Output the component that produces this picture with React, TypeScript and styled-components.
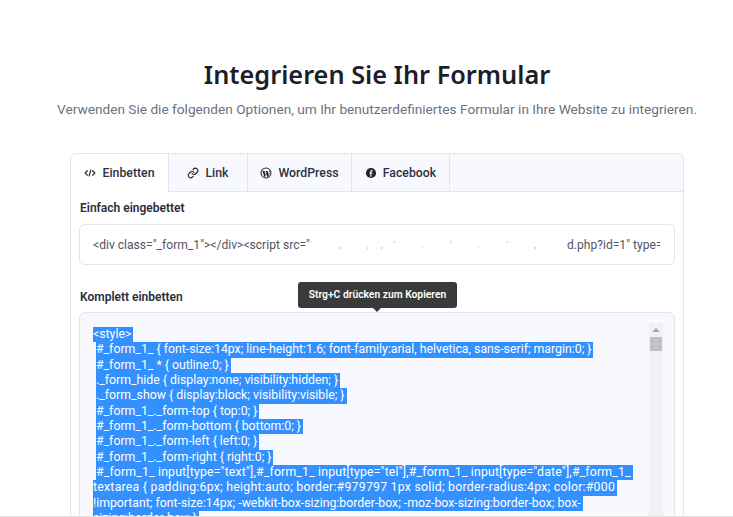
import React from 'react'
import styled, { createGlobalStyle } from 'styled-components'

const GlobalStyle = createGlobalStyle`
  html, body {
    margin: 0;
    padding: 0;
    height: 517px;
    overflow: hidden;
    background: #fff;
    font-family: Roboto, "Liberation Sans", sans-serif;
  }
  * { box-sizing: border-box; }
`

const Page = styled.div`
  width: 733px;
  height: 517px;
  overflow: hidden;
  padding-left: 21px;
  display: flex;
  flex-direction: column;
  align-items: center;
  border-bottom: 1px solid #e2e2e2;
`

const Title = styled.h1`
  margin: 56px 0 0;
  font: 600 25.3px/36px "Noto Sans", sans-serif;
  color: #1c1e29;
  white-space: nowrap;
`

const Lead = styled.p`
  margin: 6px 0 0;
  font-size: 13.66px;
  line-height: 22px;
  color: #6d7081;
  white-space: nowrap;
`

const Card = styled.section`
  margin-top: 33px;
  width: 614px;
  flex: none;
  border: 1px solid #e2e4ee;
  border-bottom: none;
  border-radius: 6px 6px 0 0;
  height: 400px;
`

const TabBar = styled.nav`
  display: flex;
  height: 38px;
  background: #f8f9fe;
  border-radius: 6px 6px 0 0;
  border-bottom: 1px solid #e2e4ee;
`

const Tab = styled.button<{ $active?: boolean; $width: number }>`
  width: ${p => p.$width}px;
  height: ${p => (p.$active ? 38 : 37)}px;
  display: flex;
  align-items: center;
  justify-content: center;
  gap: 6px;
  padding: 0;
  border: none;
  border-right: 1px solid #e2e4ee;
  border-radius: ${p => (p.$active ? '6px 0 0 0' : '0')};
  background: ${p => (p.$active ? '#fff' : 'transparent')};
  font: 500 12.3px/18px Roboto, sans-serif;
  color: #2f3140;
`

const Icon = styled.svg`
  width: 12px;
  height: 12px;
  flex: none;
  color: #23252f;
`

const Body = styled.div`
  position: relative;
  padding: 7px 8px 0 8px;
`

const FieldLabel = styled.h2`
  margin: 0;
  height: 18px;
  padding-left: 1px;
  font: 600 12px/18px Roboto, sans-serif;
  color: #2b2d38;
`

const SnippetBox = styled.div`
  margin-top: 7px;
  height: 41px;
  padding: 0 14px 0 13px;
  display: flex;
  align-items: center;
  overflow: hidden;
  white-space: nowrap;
  border: 1px solid #e2e4ee;
  border-radius: 6px;
  background: #fff;
  font-size: 12.1px;
  color: #53555f;
`

const Blurred = styled.span`
  flex: 1;
  min-width: 0;
  padding-left: 1px;
  letter-spacing: 12px;
  font-size: 9px;
  color: #b5b7c0;
`

const SnippetEnd = styled.span`
  flex: none;
  width: 93px;
  overflow: hidden;
`

const SectionLabel = styled(FieldLabel)`
  margin-top: 23px;
`

const CodeBox = styled.div`
  margin-top: 6px;
  height: 230px;
  padding: 10px 11px 0 13px;
  display: flex;
  justify-content: space-between;
  border: 1px solid #e2e4ee;
  border-radius: 6px;
  background: #f8f9ff;
`

const CodeText = styled.div`
  width: 550px;
  padding-top: 4px;
  font-size: 12.3px;
  line-height: 15.33px;
  color: #fff;
`

const CodeLine = styled.div<{ $indent?: boolean; $spread?: number }>`
  height: 15.33px;
  white-space: pre;
  padding-left: ${p => (p.$indent ? 3 : 0)}px;
  letter-spacing: ${p => p.$spread ?? 0}px;
  span {
    display: inline-block;
    background: #3390ff;
    padding-right: 2px;
  }
`

const Scrollbar = styled.div`
  width: 14px;
  display: flex;
  flex-direction: column;
  align-items: center;
  background: #f1f1f1;
`

const ScrollArrow = styled.svg`
  width: 14px;
  height: 14px;
  flex: none;
  color: #a3a3a3;
`

const ScrollArrowDown = styled(ScrollArrow)`
  margin-top: auto;
  color: #505050;
`

const ScrollThumb = styled.div`
  width: 12px;
  height: 14px;
  background: #c1c1c1;
`

const Tooltip = styled.div`
  position: absolute;
  left: 227px;
  top: 90px;
  width: 159px;
  height: 26px;
  display: flex;
  align-items: center;
  justify-content: center;
  background: #3a3a3a;
  border-radius: 3px;
  color: #fff;
  font: 600 10.3px/14px Roboto, sans-serif;
  &::after {
    content: '';
    position: absolute;
    left: 75px;
    bottom: -4px;
    border-left: 4px solid transparent;
    border-right: 4px solid transparent;
    border-top: 4px solid #3a3a3a;
  }
`

const codeLines: { text: string; indent?: boolean; spread?: number }[] = [
  { text: '<style>' },
  { text: '#_form_1_ { font-size:14px; line-height:1.6; font-family:arial, helvetica, sans-serif; margin:0; }', indent: true },
  { text: '#_form_1_ * { outline:0; }', indent: true },
  { text: '._form_hide { display:none; visibility:hidden; }', indent: true },
  { text: '._form_show { display:block; visibility:visible; }', indent: true },
  { text: '#_form_1_._form-top { top:0; }', indent: true },
  { text: '#_form_1_._form-bottom { bottom:0; }', indent: true },
  { text: '#_form_1_._form-left { left:0; }', indent: true },
  { text: '#_form_1_._form-right { right:0; }', indent: true },
  { text: '#_form_1_ input[type="text"],#_form_1_ input[type="tel"],#_form_1_ input[type="date"],#_form_1_', indent: true, spread: 0.16 },
  { text: 'textarea { padding:6px; height:auto; border:#979797 1px solid; border-radius:4px; color:#000', spread: 0.24 },
  { text: '!important; font-size:14px; -webkit-box-sizing:border-box; -moz-box-sizing:border-box; box-' },
  { text: 'sizing:border-box; }' },
]

const App = () => (
  <>
    <GlobalStyle />
    <Page>
      <Title>Integrieren Sie Ihr Formular</Title>
      <Lead>Verwenden Sie die folgenden Optionen, um Ihr benutzerdefiniertes Formular in Ihre Website zu integrieren.</Lead>
      <Card>
        <TabBar>
          <Tab $active $width={98}>
            <Icon viewBox="0 0 16 16" fill="none" stroke="currentColor" strokeWidth="1.5" strokeLinecap="round" strokeLinejoin="round">
              <path d="M4.5 5 1.5 8l3 3M11.5 5l3 3-3 3M9.2 4 6.8 12" />
            </Icon>
            Einbetten
          </Tab>
          <Tab $width={79}>
            <Icon viewBox="0 0 24 24" fill="none" stroke="currentColor" strokeWidth="2.2" strokeLinecap="round" strokeLinejoin="round">
              <path d="M10 13a5 5 0 0 0 7.5.5l3-3a5 5 0 0 0-7-7l-1.7 1.7" />
              <path d="M14 11a5 5 0 0 0-7.5-.5l-3 3a5 5 0 0 0 7 7l1.7-1.7" />
            </Icon>
            Link
          </Tab>
          <Tab $width={104}>
            <Icon viewBox="0 0 16 16">
              <circle cx="8" cy="8" r="6.6" fill="none" stroke="currentColor" strokeWidth="1.4" />
              <path fill="currentColor" d="M3 5.2h3.8v.6l-.8.1 1.5 4.4 1-2.8-.6-1.6-.6-.1v-.6h3.7v.6l-.7.1 1.5 4.3.9-2.8c.3-1 0-1.4-.5-1.5v-.6H14L10.600 14h-.4L8.200 9 6.500 14h-.4L3.500 5.900 3 5.800z" />
            </Icon>
            WordPress
          </Tab>
          <Tab $width={98}>
            <Icon viewBox="0 0 16 16">
              <circle cx="8" cy="8" r="6.800" fill="currentColor" />
              <path fill="#f8f9fe" d="M7.100 13V8.800H5.800V7.200h1.300V6c0-1.300.8-2 1.900-2h1v1.500h-.7c-.5 0-.7.300-.7.700v1h1.400l-.2 1.600H8.600V13z" />
            </Icon>
            Facebook
          </Tab>
        </TabBar>
        <Body>
          <FieldLabel>Einfach eingebettet</FieldLabel>
          <SnippetBox>
            {'<div class="_form_1"></div><script src="'}
            <Blurred>{"' , ,,' . ' . ' ,"}</Blurred>
            <SnippetEnd>{'d.php?id=1" type='}</SnippetEnd>
          </SnippetBox>
          <SectionLabel>Komplett einbetten</SectionLabel>
          <CodeBox>
            <CodeText>
              {codeLines.map(line => (
                <CodeLine key={line.text} $indent={line.indent} $spread={line.spread}>
                  <span>{line.text}</span>
                </CodeLine>
              ))}
            </CodeText>
            <Scrollbar>
              <ScrollArrow viewBox="0 0 14 14">
                <path fill="currentColor" d="M7 5 3.500 9h7z" />
              </ScrollArrow>
              <ScrollThumb />
              <ScrollArrowDown viewBox="0 0 14 14">
                <path fill="currentColor" d="M7 9 3.500 5h7z" />
              </ScrollArrowDown>
            </Scrollbar>
          </CodeBox>
          <Tooltip>Strg+C drücken zum Kopieren</Tooltip>
        </Body>
      </Card>
    </Page>
  </>
)

export default App
